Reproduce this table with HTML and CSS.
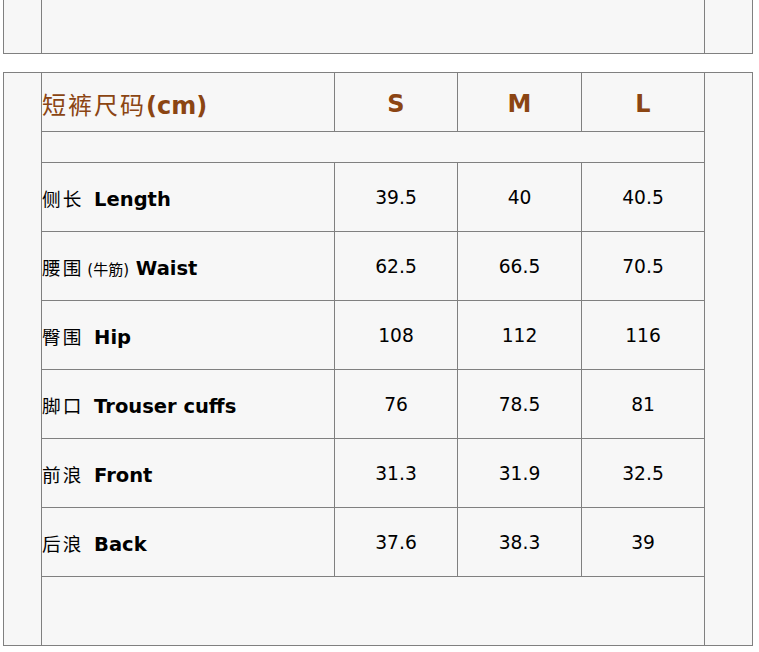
FILE: index.html
```html
<!DOCTYPE html>
<html lang="zh">
<head>
<meta charset="utf-8">
<title>短裤尺码</title>
<link rel="stylesheet" href="styles.css">
</head>
<body>
<div class="page">
  <div class="sec sec-top">
    <div class="side-l"></div>
    <div class="mid"></div>
    <div class="side-r"></div>
  </div>
  <div class="sec sec-main">
    <div class="side-l"></div>
    <div class="mid">
      <div class="grid">
        <div class="cell head label"><span><span class="zh">短裤尺码</span>(cm)</span></div>
        <div class="cell head">S</div>
        <div class="cell head">M</div>
        <div class="cell head last">L</div>
        <div class="cell blank"></div>

        <div class="cell row label"><span><span class="zh">侧长</span> Length</span></div>
        <div class="cell row num">39.5</div>
        <div class="cell row num">40</div>
        <div class="cell row num last">40.5</div>

        <div class="cell row label"><span><span class="zh">腰围</span><span class="small">(<span class="zh-s">牛筋</span>)</span> Waist</span></div>
        <div class="cell row num">62.5</div>
        <div class="cell row num">66.5</div>
        <div class="cell row num last">70.5</div>

        <div class="cell row label"><span><span class="zh">臀围</span> Hip</span></div>
        <div class="cell row num">108</div>
        <div class="cell row num">112</div>
        <div class="cell row num last">116</div>

        <div class="cell row label"><span><span class="zh">脚口</span> Trouser cuffs</span></div>
        <div class="cell row num">76</div>
        <div class="cell row num">78.5</div>
        <div class="cell row num last">81</div>

        <div class="cell row label"><span><span class="zh">前浪</span> Front</span></div>
        <div class="cell row num">31.3</div>
        <div class="cell row num">31.9</div>
        <div class="cell row num last">32.5</div>

        <div class="cell row label"><span><span class="zh">后浪</span> Back</span></div>
        <div class="cell row num">37.6</div>
        <div class="cell row num">38.3</div>
        <div class="cell row num last">39</div>
      </div>
    </div>
    <div class="side-r"></div>
  </div>
</div>
</body>
</html>
```

FILE: styles.css
```css
body {
  margin: 0;
  background: #ffffff;
  font-family: "DejaVu Sans", "Noto Sans CJK SC", sans-serif;
  color: #000;
}

.page {
  padding-left: 3px;
  width: 750px;
}

.sec {
  display: flex;
  box-sizing: border-box;
  width: 750px;
  border: 1px solid #808080;
  background: #f7f7f7;
}

.sec-top {
  border-top: none;
  height: 54px;
}

.sec-main {
  margin-top: 18px;
  height: 574px;
}

.side-l {
  width: 37px;
  border-right: 1px solid #808080;
}

.mid {
  flex: 1;
}

.side-r {
  width: 47px;
  border-left: 1px solid #808080;
}

.grid {
  display: grid;
  grid-template-columns: 293px 123px 124px 122px;
  grid-template-rows: 59px 31px repeat(6, 69px);
}

.cell {
  box-sizing: border-box;
  border-bottom: 1px solid #808080;
  border-right: 1px solid #808080;
  display: flex;
  align-items: center;
  justify-content: center;
  white-space: nowrap;
}

.cell.last {
  border-right: none;
}

.cell.label {
  justify-content: flex-start;
}

.head {
  font-size: 24px;
  font-weight: bold;
  color: #8b4513;
  padding-top: 3px;
}

.head .zh {
  font-weight: normal;
  letter-spacing: 2px;
}

.blank {
  grid-column: 1 / -1;
  border-right: none;
}

.row {
  font-size: 18.67px;
  padding-top: 0;
}

.row.label {
  font-weight: bold;
  font-size: 19.5px;
}

.row .zh {
  font-size: 18.67px;
  font-weight: normal;
  letter-spacing: 2px;
  margin-right: 4px;
}

.small {
  font-size: 15px;
  font-weight: normal;
}

.zh-s {
  font-weight: normal;
}
```
